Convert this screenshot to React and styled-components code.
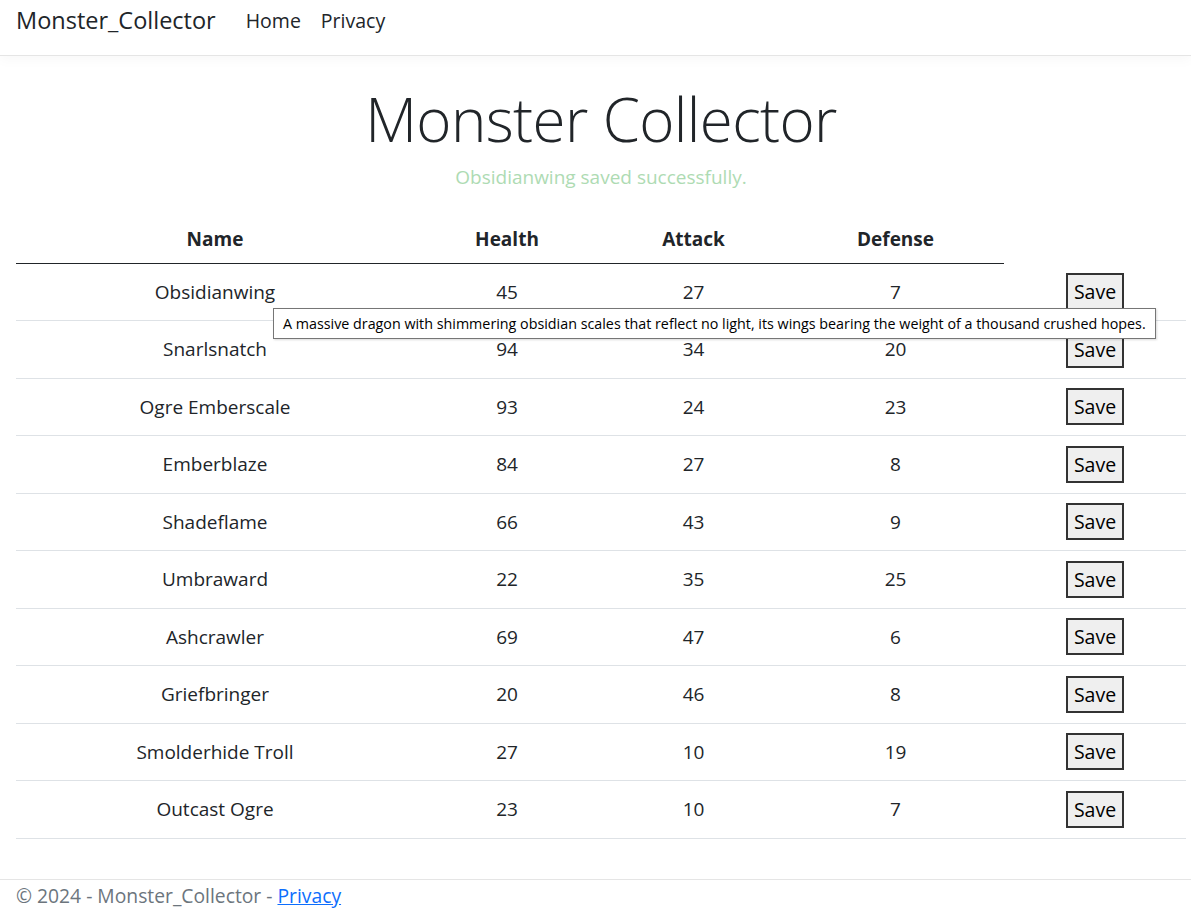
import React from "react";
import styled, { createGlobalStyle } from "styled-components";

const Global = createGlobalStyle`
  html, body { margin: 0; padding: 0; }
  body {
    font-family: "Open Sans", "Noto Sans", sans-serif;
    color: #212529;
    background: #fff;
    font-size: 19px;
    line-height: 1.5;
  }
`;

const Page = styled.div`
  position: relative;
  min-height: 919px;
  display: flex;
  flex-direction: column;
`;

const NavBar = styled.header`
  height: 56px;
  border-bottom: 1px solid #e5e5e5;
  box-shadow: 0 0.25rem 0.75rem rgba(0, 0, 0, 0.03);
  display: flex;
  align-items: center;
  padding: 0 16px;
  box-sizing: border-box;
`;

const Brand = styled.a`
  font-size: 23.5px;
  color: #212529;
  text-decoration: none;
  margin-right: 20px;
  margin-top: -13px;
`;

const NavLink = styled.a`
  font-size: 19.5px;
  color: #212529;
  text-decoration: none;
  padding: 0 10px;
  margin-top: -13px;
`;

const Main = styled.main`
  flex: 1;
  padding: 0 5px 0 16px;
`;

const Hero = styled.div`
  text-align: center;
  padding-top: 27px;
`;

const Title = styled.h1`
  font-size: 60px;
  font-weight: 300;
  margin: 0;
  line-height: 72px;
  letter-spacing: -0.6px;
`;

const Status = styled.p`
  color: #aedbb3;
  font-size: 19px;
  line-height: 28px;
  margin: 8px 0 0;
`;

const TableWrap = styled.div`
  position: relative;
  margin-top: 25px;
`;

const Table = styled.table`
  width: 100%;
  border-collapse: collapse;
  text-align: center;
`;

const Th = styled.th`
  font-weight: 700;
  padding: 8px;
  height: 47px;
  box-sizing: border-box;
  border-bottom: ${(p) => (p.$noline ? "none" : "1px solid #212529")};
  width: ${(p) => p.$w}px;
`;

const Td = styled.td`
  padding: 0 8px;
  height: 57.5px;
  box-sizing: border-box;
  border-bottom: 1px solid #dee2e6;
  vertical-align: middle;
`;

const SaveButton = styled.button`
  font-family: "Open Sans", sans-serif;
  font-size: 19.5px;
  line-height: 1.4;
  padding: 1px 6px;
  height: 37px;
  background: #efefef;
  border: 2px solid #333;
  color: #000;
  margin-left: 0;
`;

const Tooltip = styled.div`
  position: absolute;
  left: 257px;
  top: 92px;
  border: 1px solid #767676;
  background: #fff;
  font-size: 14.3px;
  line-height: 19px;
  padding: 5px 9px;
  white-space: nowrap;
  box-shadow: 1px 1px 2px rgba(0, 0, 0, 0.15);
  color: #000;
`;

const Footer = styled.footer`
  border-top: 1px solid #e5e5e5;
  height: 40px;
  box-sizing: border-box;
  padding: 0 16px;
  color: #6c757d;
  font-size: 19.3px;
  line-height: 32px;
`;

const FooterLink = styled.a`
  color: #0d6efd;
  text-decoration: underline;
`;

const monsters = [
  ["Obsidianwing", 45, 27, 7],
  ["Snarlsnatch", 94, 34, 20],
  ["Ogre Emberscale", 93, 24, 23],
  ["Emberblaze", 84, 27, 8],
  ["Shadeflame", 66, 43, 9],
  ["Umbraward", 22, 35, 25],
  ["Ashcrawler", 69, 47, 6],
  ["Griefbringer", 20, 46, 8],
  ["Smolderhide Troll", 27, 10, 19],
  ["Outcast Ogre", 23, 10, 7],
];

export default function App() {
  return (
    <Page>
      <Global />
      <NavBar>
        <Brand href="#">Monster_Collector</Brand>
        <NavLink href="#">Home</NavLink>
        <NavLink href="#">Privacy</NavLink>
      </NavBar>
      <Main>
        <Hero>
          <Title>Monster Collector</Title>
          <Status>Obsidianwing saved successfully.</Status>
        </Hero>
        <TableWrap>
          <Table>
            <thead>
              <tr>
                <Th $w={398}>Name</Th>
                <Th $w={186}>Health</Th>
                <Th $w={187}>Attack</Th>
                <Th $w={217}>Defense</Th>
                <Th $noline />
              </tr>
            </thead>
            <tbody>
              {monsters.map(([name, h, a, d]) => (
                <tr key={name}>
                  <Td>{name}</Td>
                  <Td>{h}</Td>
                  <Td>{a}</Td>
                  <Td>{d}</Td>
                  <Td>
                    <SaveButton>Save</SaveButton>
                  </Td>
                </tr>
              ))}
            </tbody>
          </Table>
          <Tooltip>
            A massive dragon with shimmering obsidian scales that reflect no light, its wings bearing the weight of a thousand crushed hopes.
          </Tooltip>
        </TableWrap>
      </Main>
      <Footer>
        © 2024 - Monster_Collector - <FooterLink href="#">Privacy</FooterLink>
      </Footer>
    </Page>
  );
}
